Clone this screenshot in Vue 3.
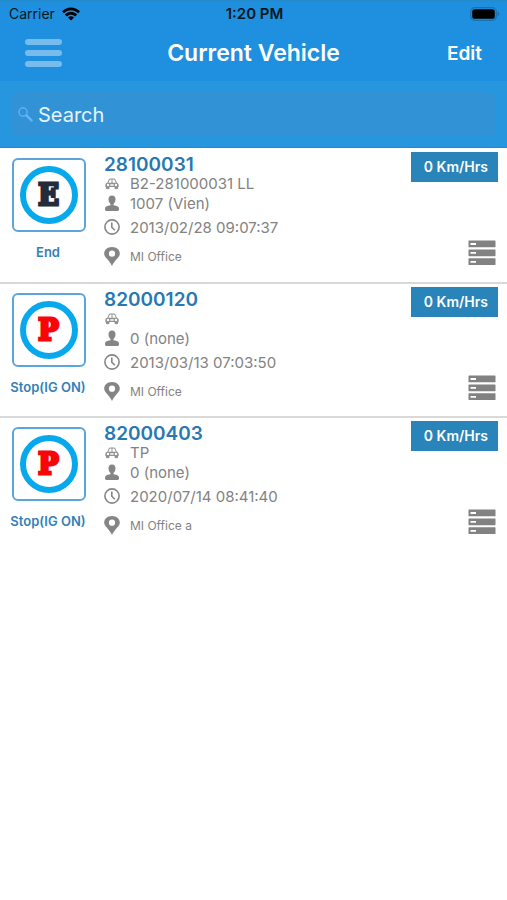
<script setup>
import { ref } from 'vue'

const query = ref('')

const vehicles = [
  { id: '28100031', plate: 'B2-281000031 LL', driver: '1007 (Vien)', time: '2013/02/28 09:07:37', place: 'MI Office', speed: '0 Km/Hrs', mark: 'E', status: 'End', kind: 'end' },
  { id: '82000120', plate: '', driver: '0 (none)', time: '2013/03/13 07:03:50', place: 'MI Office', speed: '0 Km/Hrs', mark: 'P', status: 'Stop(IG ON)', kind: 'stop' },
  { id: '82000403', plate: 'TP', driver: '0 (none)', time: '2020/07/14 08:41:40', place: 'MI Office a', speed: '0 Km/Hrs', mark: 'P', status: 'Stop(IG ON)', kind: 'stop' }
]
</script>

<template>
  <div class="screen">
    <header class="top">
      <div class="status-bar">
        <div class="carrier">
          <span>Carrier</span>
          <svg class="wifi" viewBox="0 0 18 14" aria-hidden="true">
            <path d="M0 4.3C5-.9 13-.9 18 4.3L16.1 6.3C12.2 2.3 5.8 2.3 1.9 6.3Z" />
            <path d="M2.9 7.4C6.3 3.9 11.7 3.9 15.1 7.4L13.1 9.4C10.8 7.1 7.2 7.1 4.9 9.4Z" />
            <path d="M5.9 10.4C7.7 8.7 10.3 8.7 12.1 10.4L9 13.6Z" />
          </svg>
        </div>
        <div class="clock">1:20 PM</div>
        <div class="power">
          <svg class="battery" viewBox="0 0 30 14" aria-hidden="true">
            <rect x=".7" y=".7" width="25.6" height="12.6" rx="4" fill="none" stroke="#1870b0" stroke-width="1.2" />
            <rect x="2.2" y="2.2" width="22.6" height="9.6" rx="2.6" />
            <path d="M27.5 4.8C29.7 5.4 29.7 8.6 27.5 9.2Z" fill="#1870b0" />
          </svg>
        </div>
      </div>
      <nav class="nav-bar">
        <button class="menu" type="button" aria-label="Menu"><i></i><i></i><i></i></button>
        <h1>Current Vehicle</h1>
        <button class="edit" type="button">Edit</button>
      </nav>
    </header>

    <div class="search-bar">
      <label class="search">
        <svg viewBox="0 0 16 16" aria-hidden="true">
          <circle cx="5.4" cy="5.4" r="4.4" fill="none" stroke="#66b5f7" stroke-width="1.3" />
          <path d="M9 9L14.4 14.2" stroke="#66b5f7" stroke-width="2.6" stroke-linecap="round" />
        </svg>
        <input v-model="query" type="search" placeholder="Search" aria-label="Search" />
      </label>
    </div>

    <ul class="list">
      <li v-for="v in vehicles" :key="v.id" class="vehicle">
        <div class="state">
          <div class="emblem"><div class="ring" :class="v.kind">{{ v.mark }}</div></div>
          <span class="state-name">{{ v.status }}</span>
        </div>

        <div class="details">
          <h2>{{ v.id }}</h2>
          <div class="line plate">
            <svg viewBox="0 0 16 13" aria-hidden="true">
              <path d="M3.4 5.6L4.7 2.3Q5.2 1.2 6.4 1.2H9.8Q11 1.2 11.5 2.3L12.8 5.6M8 1.4V5.4" fill="none" stroke="#929292" stroke-width="1.1" />
              <path fill="#929292" fill-rule="evenodd" d="M2.7 5.2H13.3Q15.2 5.6 15.2 7.4V9.8H.8V7.4Q.8 5.6 2.7 5.2ZM3.7 6.3A1.3 1.3 0 1 0 3.7 8.9A1.3 1.3 0 0 0 3.7 6.3ZM12.3 6.3A1.3 1.3 0 1 0 12.3 8.9A1.3 1.3 0 0 0 12.3 6.3ZM6.2 6.8V8.4H9.8V6.8Z" />
              <path fill="#929292" d="M1.4 9H5.2V11Q5.2 12.2 3.3 12.2T1.4 11ZM10.8 9H14.6V11Q14.6 12.2 12.7 12.2T10.8 11Z" />
            </svg>
            <span>{{ v.plate }}</span>
          </div>
          <div class="line driver">
            <svg viewBox="0 0 16 17" aria-hidden="true">
              <path d="M8 .5C10.6.5 11.6 2.3 11.5 4.5C11.4 6.7 10.4 8.1 9.5 8.9V10.2C11.5 10.8 14.2 10.8 14.6 12.4H1.4C1.8 10.8 4.5 10.8 6.5 10.2V8.9C5.6 8.1 4.6 6.7 4.5 4.5C4.4 2.3 5.4.5 8 .5Z" />
              <rect x="1" y="12" width="14" height="4" rx="1.4" />
            </svg>
            <span>{{ v.driver }}</span>
          </div>
          <div class="line time">
            <svg viewBox="0 0 16 16" aria-hidden="true">
              <circle cx="8" cy="8" r="7.1" fill="none" stroke="#858585" stroke-width="1.6" />
              <path d="M7.8 3.4V8.2L10.8 11.2" fill="none" stroke="#858585" stroke-width="1.6" />
            </svg>
            <span>{{ v.time }}</span>
          </div>
          <div class="line place">
            <svg viewBox="0 0 16 19" aria-hidden="true">
              <path fill-rule="evenodd" d="M8 0C12.6 0 15.8 2.8 15.8 6.7C15.8 10.5 11 12.4 8 19C5 12.4.2 10.5.2 6.7C.2 2.8 3.4 0 8 0ZM8 3.6A3.1 3.1 0 1 0 8 9.8A3.1 3.1 0 0 0 8 3.6Z" />
            </svg>
            <span>{{ v.place }}</span>
          </div>
        </div>

        <div class="side">
          <span class="speed">{{ v.speed }}</span>
          <button class="records" type="button" aria-label="Records">
            <svg viewBox="0 0 28 26" aria-hidden="true">
              <g fill="#828282">
                <rect x=".5" y=".5" width="27" height="6.8" rx=".6" />
                <rect x=".5" y="9.4" width="27" height="6.8" rx=".6" />
                <rect x=".5" y="18.3" width="27" height="6.8" rx=".6" />
              </g>
              <path d="M2.5 4H8M2.5 12.9H8M2.5 21.8H8" stroke="#fff" stroke-width="1.8" />
            </svg>
          </button>
        </div>
      </li>
    </ul>
  </div>
</template>

<style>
body {
  margin: 0;
  background: #fff;
}
</style>

<style scoped>
.screen {
  font-family: Inter, "Liberation Sans", sans-serif;
  color: #828282;
}

button {
  padding: 0;
  border: 0;
  background: none;
  font: inherit;
  color: inherit;
}

.top {
  background: #1e90df;
  border-top: 2px solid #268bcb;
  box-sizing: border-box;
  height: 81px;
}

.status-bar {
  display: grid;
  grid-template-columns: 1fr auto 1fr;
  align-items: center;
  height: 23px;
  padding: 0 7px 0 9px;
  font-size: 14px;
  color: #0b1620;
}

.carrier {
  display: flex;
  align-items: center;
  gap: 7px;
}

.wifi {
  width: 18px;
  height: 14px;
  fill: #000;
}

.clock {
  font-size: 15px;
  font-weight: 600;
}

.power {
  display: flex;
  justify-content: flex-end;
}

.battery {
  width: 30px;
  height: 14px;
}

.nav-bar {
  display: grid;
  grid-template-columns: 1fr auto 1fr;
  align-items: center;
  height: 55px;
  padding: 0 25px;
  color: #fff;
}

.menu {
  display: flex;
  flex-direction: column;
  gap: 5px;
  width: 37px;
}

.menu i {
  height: 6px;
  border-radius: 3px;
  background: #77bcec;
}

h1 {
  margin: 0;
  font-size: 23px;
  font-weight: 600;
  line-height: 28px;
}

.edit {
  justify-self: end;
  padding-top: 2px;
  font-size: 19px;
  font-weight: 600;
  line-height: 24px;
}

.search-bar {
  padding: 11px;
  background: #2696df;
  border-bottom: 1px solid #228bcf;
}

.search {
  display: flex;
  align-items: center;
  gap: 5px;
  height: 44px;
  padding: 0 7px;
  border-radius: 8px;
  background: #3192d5;
}

.search svg {
  width: 15px;
  height: 15px;
}

.search input {
  flex: 1;
  min-width: 0;
  padding: 2px 0 0;
  border: 0;
  outline: 0;
  background: none;
  color: #fff;
  font: 20px Inter, "Liberation Sans", sans-serif;
  appearance: none;
}

.search input::placeholder {
  color: #e6f5ff;
  opacity: 1;
}

.list {
  margin: 0;
  padding: 0;
  list-style: none;
}

.vehicle {
  display: flex;
  box-sizing: border-box;
  height: 134px;
}

.vehicle + .vehicle {
  border-top: 2px solid #d9d9d9;
}

.vehicle + .vehicle .state,
.vehicle + .vehicle .details,
.vehicle + .vehicle .side {
  margin-top: -1px;
}

.state {
  display: flex;
  flex-direction: column;
  align-items: center;
  width: 96px;
  padding-top: 10px;
}

.emblem {
  display: grid;
  place-items: center;
  box-sizing: border-box;
  width: 74px;
  height: 74px;
  margin-left: 1px;
  border: 2px solid #5aa5dc;
  border-radius: 6px;
}

.ring {
  display: grid;
  place-items: center;
  box-sizing: border-box;
  width: 58px;
  height: 58px;
  border: 6px solid #08a9ec;
  border-radius: 50%;
  font: bold 30px/30px "DejaVu Serif Condensed", "DejaVu Serif", serif;
  -webkit-text-stroke: 3px currentColor;
  text-shadow: 1px 0 2px #999;
}

.ring.end {
  color: #232c3b;
}

.ring.stop {
  color: #f80509;
}

.state-name {
  margin-top: 12px;
  font-size: 13px;
  font-weight: 600;
  line-height: 16px;
  color: #337fb8;
}

.details {
  flex: 1;
  padding: 6px 0 0 8px;
}

h2 {
  margin: 0;
  font-size: 19px;
  font-weight: 600;
  line-height: 22px;
  color: #2878b4;
}

.line {
  display: flex;
  align-items: center;
  gap: 10px;
  font-size: 15px;
  line-height: 15px;
}

.line svg {
  width: 16px;
  fill: #858585;
}

.plate {
  height: 15px;
}

.plate svg {
  height: 12px;
}

.driver {
  height: 24px;
}

.time {
  height: 24px;
}

.place {
  height: 34px;
  font-size: 12px;
}

.side {
  display: flex;
  flex-direction: column;
  align-items: flex-end;
  gap: 58px;
  padding: 4px 9px 0 0;
}

.speed {
  padding: 0 10px 0 13px;
  font-size: 14px;
  font-weight: 600;
  line-height: 30px;
  background: #2984b9;
  color: #fff;
}

.records {
  display: flex;
  margin-right: 2px;
}

.records svg {
  width: 28px;
  height: 26px;
}
</style>
